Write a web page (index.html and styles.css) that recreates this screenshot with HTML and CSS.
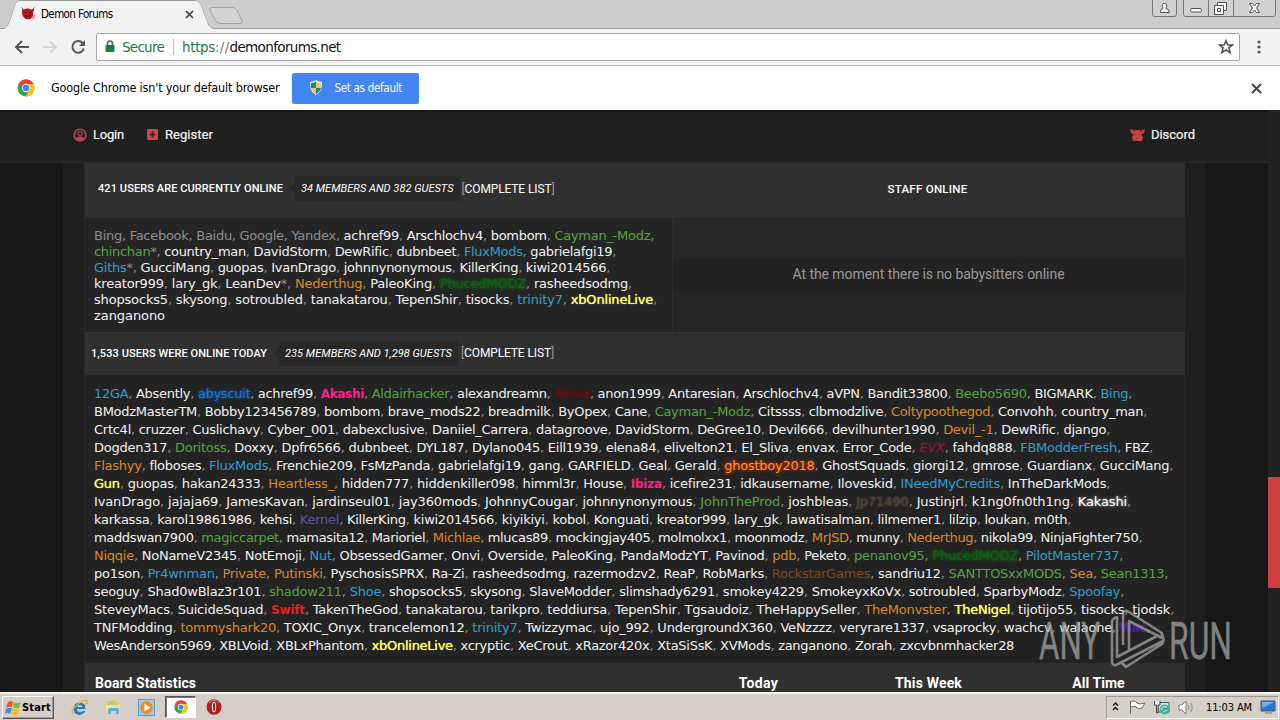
FILE: index.html
```html
<!DOCTYPE html>
<html lang="en">
<head>
<meta charset="utf-8">
<title>Demon Forums</title>
<link rel="stylesheet" href="styles.css">
</head>
<body>
<div class="screen">
  <header class="tabstrip">
    <svg class="tab-shape" width="250" height="29"><path d="M0 28.5H5Q8 27 10 21L15 6Q17 1 20 .5H195Q199 1 201 6L207 22Q209 28 213 28.5H250" fill="none" stroke="#999"/><path d="M4 29Q8 27 10 21L15 6Q17 1 20 1H195Q199 1 201 6L207 22Q209 28 214 29Z" fill="#f2f2f2"/><path d="M212 7.500H233Q236 8 237 10L242 21Q243 23.500 240 23.500H220Q217 23 216 21L210 10Q209 8 212 7.500Z" fill="#d3d3d3" stroke="#a2a2a2"/></svg>
    <div class="tab">
      <svg width="15" height="14" viewBox="0 0 15 14"><path d="M1 2L3 2.500Q7 .5 10 2.500L13 2Q13 4 12 6Q13 10 9 12Q4 13 2 9.500L1 6Z" fill="#b5141c"/><path d="M.5 .5L3 3.500M13.500 .5L10.500 3.500" stroke="#555"/><path d="M4 5L6 6M10 5L8 6M4 8.500Q7 11 10 7.500" stroke="#500" fill="none"/><path d="M11 12Q14 12 13 8" stroke="#d55" fill="none"/></svg>
      <span class="ui tab-title" data-fit="71.500">Demon Forums</span>
      <svg class="tab-close" width="9" height="9"><path d="M1 1L8 8M8 1L1 8" stroke="#444" stroke-width="1.700"/></svg>
    </div>
    <svg class="winctl" width="126" height="18"><g fill="#d1d1d1" stroke="#777"><path d="M.5 -1V14Q.5 16.500 3 16.500H22Q24.500 16.500 24.500 14V-1"/><path d="M31.500 -1V14Q31.500 16.500 34 16.500H121Q123.500 16.500 123.500 14V-1M56.500 0V16M81.500 0V16"/></g><g fill="#f6f6f6" stroke="#555"><path d="M8.500 12.500Q8 8.500 11 8.500Q9 3.500 12.500 3.500Q16 3.500 14 8.500Q17 8.500 17.500 12.500Z"/><rect x="38.500" y="8.500" width="11" height="3.500" rx="1.500"/><path d="M65.500 2.500H74.500V10.500H65.500Z"/><path d="M62.500 5.500H71.500V14.500H62.500ZM65.500 8.500H68.500V11.500H65.500Z"/><path d="M97.500 3.500H100.500L102.500 6L104.500 3.500H107.500L104.500 8L107.500 12.500H104.500L102.500 10L100.500 12.500H97.500L100.500 8Z"/></g></svg>
  </header>

  <div class="toolbar">
    <svg class="nav-icons" width="88" height="20" fill="none" stroke-width="2"><path d="M21 10H8M14 4L8 10L14 16" stroke="#555"/><path d="M35 10H48M42 4.500L48 10L42 15.500" stroke="#d5d5d5"/><path d="M74.500 6A5.800 5.800 0 1 0 75.800 11.500" stroke="#555"/><path d="M77 3V9H71Z" fill="#555"/></svg>
    <div class="omnibox">
      <svg width="10" height="13"><path d="M2.500 6V4Q2.500 1 5 1T7.500 4V6" fill="none" stroke="#188038" stroke-width="1.500"/><rect x=".5" y="5" width="9" height="7" rx="1" fill="#188038"/></svg>
      <span class="secure" data-fit="42">Secure</span>
      <i class="divider"></i>
      <span class="url scheme" data-fit="33">https</span><span class="url slashes" data-fit="14.500">://</span><span class="url" data-fit="111">demonforums.net</span>
      <svg class="star" width="16" height="16"><path d="M8 1.700L9.800 6H14.500L10.800 8.900L12.200 13.600L8 10.800L3.800 13.600L5.200 8.900L1.500 6H6.200Z" fill="none" stroke="#4d4d4d" stroke-width="1.500"/></svg>
    </div>
    <svg class="menu" width="6" height="16" fill="#555"><circle cx="3" cy="3" r="1.600"/><circle cx="3" cy="8" r="1.600"/><circle cx="3" cy="13" r="1.600"/></svg>
  </div>

  <div class="infobar">
    <svg width="18" height="18" viewBox="0 0 18 18"><use href="#chrome"/></svg>
    <span class="ui prompt" data-fit="228.500">Google Chrome isn't your default browser</span>
    <button class="set-default">
      <svg width="14" height="16" viewBox="0 0 14 16"><path d="M7 0Q10 2 13 2Q14 11 7 15Q0 11 1 2Q4 2 7 0Z" fill="#e8edf3"/><path d="M7 1.500V8H2V3Q5 3 7 1.500ZM7 8H12Q11 12 7 14Z" fill="#1d78b9"/><path d="M7 1.500V8H12V3Q9 3 7 1.500ZM7 8H2Q3 12 7 14Z" fill="#f7cf35"/></svg>
      <span class="ui" data-fit="67.500">Set as default</span>
    </button>
    <svg class="info-close" width="11" height="11"><path d="M1 1L10 10M10 1L1 10" stroke="#444" stroke-width="2"/></svg>
  </div>

  <main class="page">
    <div class="content">
      <nav class="site-nav">
        <svg width="14" height="14"><circle cx="7" cy="7" r="5.800" fill="none" stroke="#c8404a" stroke-width="1.600"/><circle cx="7" cy="5.500" r="2.300" fill="none" stroke="#c8404a"/><path d="M3 11Q4 8 7 8.500Q10 8 11 11L7 13Z" fill="#c8404a"/></svg>
        <span class="login" data-fit="31">Login</span>
        <svg class="plus" width="11" height="11" viewBox="0 0 12 12"><rect width="12" height="12" rx="1.500" fill="#d0424e"/><path d="M6 3V9M3 6H9" stroke="#222" stroke-width="1.800"/></svg>
        <span class="register" data-fit="48">Register</span>
        <svg class="discord-icon" width="15" height="14" fill="#cc4141"><path d="M0 1L2 2L3 1L4 4L5 2H10L11 4L12 1L13 2L15 1L14 5L11 6.500L13 9L12 13H3L2 9L4 6.500L1 5Z"/><path d="M5 7H6M9 7H10M6 10H9" stroke="#8b2b2d"/></svg>
        <span data-fit="44">Discord</span>
      </nav>
      <div class="shell">
        <section class="panel">
          <div class="head head-now">
            <span class="title" data-fit="185">421 USERS ARE CURRENTLY ONLINE</span>
            <span class="pill"><em data-fit="152.500">34 MEMBERS AND 382 GUESTS</em></span>
            <span class="complete" data-fit="93">[<b>COMPLETE LIST</b>]</span>
            <span class="staff"><span data-fit="80">STAFF ONLINE</span></span>
          </div>
          <div class="row-now">
            <div class="names" id="now"></div>
            <div class="no-staff"><span data-fit="272">At the moment there is no babysitters online</span></div>
          </div>
          <div class="head head-today">
            <span class="title" data-fit="176">1,533 USERS WERE ONLINE TODAY</span>
            <span class="pill"><em data-fit="167">235 MEMBERS AND 1,298 GUESTS</em></span>
            <span class="complete" data-fit="93">[<b>COMPLETE LIST</b>]</span>
          </div>
          <div class="names today" id="today"></div>
          <div class="head stats">
            <span class="board"><span data-fit="101">Board Statistics</span></span>
            <span class="stat"><span data-fit="39.500">Today</span></span>
            <span class="stat"><span data-fit="67">This Week</span></span>
            <span class="stat"><span data-fit="52.500">All Time</span></span>
          </div>
        </section>
      </div>
    </div>
    <div class="scrollbar"><div class="thumb"></div></div>
  </main>

  <footer class="taskbar">
    <div class="start">
      <svg width="16" height="16"><path d="M3 2Q6 0 8 2L7 7Q4 6 1 8Z" fill="#e65a2b"/><path d="M9 2Q12 4 16 2L14 8Q11 9 8 7Z" fill="#78b843"/><path d="M1 9Q4 7 7 8L5 14Q3 12 0 14Z" fill="#3c8ed0"/><path d="M8 8Q11 10 14 9L12 15Q8 16 6 14Z" fill="#f4bd25"/></svg>
      <span data-fit="29">Start</span>
    </div>
    <svg class="ie" width="18" height="17"><path d="M14.500 10H6Q6 13 9 13Q11 13 12 12H14.500Q12 16 8 16Q2.500 15 2.500 9.500Q3 3.500 8.500 3.500Q14.500 3.500 14.500 10ZM6 8H11.500Q11 6 9 6T6 8Z" fill="#1f7fce"/><path d="M2 15Q-1 12 6 6Q15 -1 16 2Q17 4 14 6" fill="none" stroke="#e1ad24" stroke-width="1.300"/></svg>
    <svg class="explorer" width="16" height="16"><path d="M1 3H6L7 1H12V4H15V13H1Z" fill="#ecca60"/><path d="M3 2H10V6H3Z" fill="#a6cd94"/><path d="M1 6H15V13H1Z" fill="#f6e28c"/><path d="M3 15V10Q3 9 5 9H12Q14 9 14 11V15H11V12H6V15H3Z" fill="#62aee0"/></svg>
    <svg class="media" width="17" height="17"><rect x=".5" y=".5" width="16" height="16" fill="#9fc8ec" stroke="#5f9bcf"/><circle cx="8.500" cy="8.500" r="6.300" fill="#f38b18"/><path d="M6.500 4.500L12.500 8.500L6.500 12.500Z" fill="#fff"/></svg>
    <div class="active-app"><svg width="14" height="14" viewBox="0 0 18 18"><g id="chrome"><circle cx="9" cy="9" r="8.500" fill="#32a350"/><path d="M1.600 4.800A8.500 8.500 0 0 1 16.400 4.800L9 5.500L5 10Z" fill="#e84335"/><path d="M16.500 5A8.500 8.500 0 0 1 8.500 17.500L12.500 11L12 6L9 5Z" fill="#fbc116"/><circle cx="9" cy="9" r="4.200" fill="#fff"/><circle cx="9" cy="9" r="3.300" fill="#4a82ed"/></g></svg></div>
    <svg class="opera" width="16" height="16"><ellipse cx="8" cy="8" rx="7.500" ry="7.800" fill="#b31c1d"/><path d="M3 4Q8 -1 13 4" stroke="#e77" fill="none"/><ellipse cx="8" cy="8" rx="2.200" ry="5.300" fill="#f3e9e5"/><ellipse cx="8" cy="8" rx="1" ry="4.300" fill="#9b1717"/></svg>
    <div class="tray">
      <svg width="94" height="20"><path d="M6 8.500L8.500 6L11 8.500M6 13L8.500 10.500L11 13" fill="none" stroke="#111" stroke-width="1.500"/><path d="M23.500 4V17M23.500 4.500Q28 3 30 6Q33 8 38 6L35 11Q31 13 29 10Q27 9 23.500 10Z" fill="#fff" stroke="#666"/><path d="M51 5.500H62V15H51Z" fill="#d5e5ea" stroke="#3e5d68"/><path d="M47.500 4V8H49.500V16H51V8H53V4" fill="#eee" stroke="#444"/><circle cx="57.500" cy="12.500" r="5" fill="#3baea4"/><path d="M54 13Q56 8 60 10M56 15L60 13" stroke="#b9dfc5" fill="none" stroke-width="1.300"/><path d="M72 8H75L79 4V17L75 13H72Z" fill="#fff" stroke="#777"/><path d="M81 8Q83 10.500 81 13M83.500 6Q87 10.500 83.500 15" fill="none" stroke="#888"/></svg>
      <span class="clock" data-fit="46">11:03 AM</span>
      <svg class="desk" width="16" height="14"><path d="M1 1H15V11H1Z" fill="#2b77d8" stroke="#3c5877"/><path d="M2 2H14L2 8Z" fill="#75b2f2"/><path d="M5 13H12" stroke="#777"/></svg>
    </div>
  </footer>

  <svg class="watermark" width="194" height="64"><g fill="#a9a9a9" stroke="#a9a9a9" stroke-width=".4" font-family="Roboto" font-size="52"><text x="0" y="50" textLength="61" lengthAdjust="spacingAndGlyphs">ANY</text><text x="130" y="50" textLength="63" lengthAdjust="spacingAndGlyphs">RUN</text></g><g fill="none" stroke="#a9a9a9" stroke-width="2.600" stroke-linejoin="round"><path d="M84 36V4Q86 0 90 3L123 24V29L90 12V42"/><path d="M79 8Q73 9 73 13V53Q74 58 79 55L124 32M78 8V48L120 26M83 54L87 58L123 35Q126 31 123 26"/></g></svg>
</div>
<script src="app.js"></script>
</body>
</html>
```
FILE: styles.css
```css
* { box-sizing: border-box; }
body { margin: 0; overflow: hidden; }
svg { display: block; flex: none; }
.screen { position: relative; width: 1280px; height: 720px; display: flex; flex-direction: column; overflow: hidden; font-family: "DejaVu Sans", Verdana, sans-serif; }
[data-fit] { display: inline-block; white-space: nowrap; }
.ui { font: 11.5px "DejaVu Sans Condensed", "DejaVu Sans", sans-serif; }

.tabstrip { height: 29px; display: flex; justify-content: space-between; background: #ccc; border-bottom: 1px solid #999; flex: none; }
.tab-shape { position: absolute; left: 0; top: 0; }
.tab { position: relative; display: flex; align-items: center; height: 28px; padding-left: 21px; color: #000; }
.tab-title { margin-left: 5px; }
.tab-close { margin-left: 72px; margin-top: 1px; }
.winctl { margin-right: 2px; }
.toolbar { height: 37px; background: #f2f2f2; border-bottom: 1px solid #b6b6b6; display: flex; align-items: center; flex: none; padding: 0 18px 1px 8px; }
.omnibox { width: 1144px; height: 28px; background: #fff; border: 1px solid #a6a6a6; border-radius: 2px; display: flex; align-items: center; padding: 0 5px 0 8px; font-size: 13.5px; }
.secure { margin-left: 7px; color: #188038; }
.divider { width: 1px; height: 16px; background: #bbb; margin: 0 8px 0 9px; }
.url { color: #111; }
.url.scheme { color: #188038; }
.url.slashes { color: #777; }
.star { margin-left: auto; }
.menu { margin-left: 16px; }
.infobar { height: 44px; background: #fff; display: flex; align-items: center; padding: 0 18px 0 17px; flex: none; }
.prompt { margin-left: 16px; font-size: 12.5px; margin-top: -2px; }
.set-default { margin-left: 12px; width: 127px; height: 31px; display: flex; align-items: center; background: #4285f4; border: 0; border-radius: 2px; color: #fff; padding: 0 0 1px 17px; }
.set-default .ui { margin-left: 12px; }
.info-close { margin-left: auto; }

.page { height: 582px; background: #171717; display: flex; flex: none; overflow: hidden; }
.content { width: 1268px; }
.site-nav { height: 53px; background: #202020; border-bottom: 2px solid #272727; border-top: 2px solid #191919; display: flex; align-items: center; padding: 0 73px 4px; color: #f4f4f4; font: 400 13px Roboto, sans-serif; -webkit-text-stroke: .2px; }
.login { margin-left: 6px; }
.plus { margin-left: 23px; }
.register { margin-left: 7px; }
.discord-icon { margin-left: auto; margin-right: 6px; }
.shell { margin-left: 63px; width: 1142px; height: 529px; padding: 0 20px 0 21px; background: #1f1f1f; }
.panel { width: 1101px; background: #252525; border-left: 1px solid #2c2c2c; }
.head { background: #303030; display: flex; align-items: center; color: #fff; font: 500 11px Roboto, sans-serif; }
.head-now { height: 55px; padding: 0 0 3px 13px; border-bottom: 1px solid #282828; }
.head-today { height: 43px; padding: 0 0 2px 6px; border-top: 1px solid #353535; }
.pill { position: relative; height: 25px; display: flex; align-items: center; background: #282828; margin-left: 12px; padding: 0 6px; font-weight: 400; }
.pill::before { content: ""; position: absolute; left: -5px; top: 7px; border: 5px solid transparent; border-right-color: #282828; border-left: 0; }
.complete { margin-left: 2px; font-size: 12px; color: #999; font-weight: 400; }
.head-today .complete { margin-left: 3px; }
.complete b { color: #fff; font-weight: 400; }
.staff { margin-left: 333px; font-size: 11.5px; }
.row-now { height: 114px; display: flex; }
.names { width: 588px; padding: 10px 0 0 9px; font-size: 13px; line-height: 16px; color: #8e8e8e; border-right: 1px solid #2d2d2d; }
.names div { white-space: pre; height: 16px; }
.names.today { width: auto; height: 288px; border: 0; line-height: 18px; background: #232323; }
.names.today div { height: 18px; }
.no-staff { flex: 1; display: flex; align-items: center; justify-content: center; color: #999; font: 14px Roboto, sans-serif; background: linear-gradient(#272727 0 34%, #232323 36% 64%, #262626 66%); padding: 0 1px 2px 0; }
.stats { height: 40px; font: 700 14px Roboto, sans-serif; }
.board { width: 580px; padding-left: 10px; }
.stat { width: 170px; text-align: center; padding-left: 17px; }
.scrollbar { width: 12px; background: #222; padding-top: 367px; }
.thumb { height: 111px; background: #cc3f3f; }

.names span { color: #f2f2f2; }
.names .x { color: #8e8e8e; }
.names .g { color: #55a33d; }
.names .b { color: #2b9fd0; }
.names .o { color: #df8820; }
.names .y { color: #ffff68; text-shadow: 0 0 1px #ffff68; }
.names .p { color: #ff1f8d; font-weight: bold; font-size: 12px; }
.names .r { color: #e3212a; font-weight: bold; font-size: 12px; }
.names .k { color: #5a55a5; }
.names .a { color: #2674c2; text-shadow: 0 0 3px #0b55aa, 0 0 4px #0b55aa; }
.names .h { color: #145e18; text-shadow: 0 0 3px #126a14, 0 0 4px #126a14; }
.names .d { color: #5e1111; text-shadow: 0 0 3px #800b0b; }
.names .f { color: #ff9140; text-shadow: 0 0 4px #d83500, 0 0 4px #a33000; }
.names .e { color: #8c1640; font-style: italic; text-shadow: 0 0 3px #5c1630; }
.names .j { color: #45413c; text-shadow: 0 0 2px #776242; }
.names .n { color: #7e481c; }
.names .w { color: #fff; text-shadow: 0 0 3px #bbb; }
.names .v { color: #5722a0; text-shadow: 0 0 3px #5a18cc; }

.taskbar { height: 28px; background: #d5cfc7; border-top: 2px solid #f7f5f0; display: flex; align-items: center; flex: none; padding: 0 1px 0 2px; }
.start { width: 52px; height: 23px; display: flex; align-items: center; gap: 1px; padding-left: 2px; border: 1px solid; border-color: #fff #555 #555 #fff; box-shadow: inset -1px -1px #999; font: bold 11px "DejaVu Sans Condensed", sans-serif; margin-top: 1px; }
.ie { margin-left: 17px; }
.explorer { margin-left: 16px; }
.media { margin-left: 17px; }
.active-app { margin-left: 10px; width: 31px; height: 22px; background: #fff; border: 1px solid; border-color: #555 #fff #fff #555; box-shadow: inset 1px 1px #777; display: flex; align-items: center; justify-content: center; }
.opera { margin-left: 10px; }
.tray { margin-left: auto; width: 173px; height: 23px; border: 1px solid; border-color: #999 #fff #fff #999; display: flex; align-items: center; }
.clock { margin-left: 5px; font: 11px "DejaVu Sans Condensed", sans-serif; }
.desk { margin-left: 8px; }
.watermark { position: absolute; left: 1039px; top: 609px; opacity: .72; overflow: visible; }
```
FILE: app.js
```js
// Each entry: [line width, members]. "c:name" assigns the member group colour.
const now = [
  [560, "x:Bing, x:Facebook, x:Baidu, x:Google, x:Yandex, achref99, Arschlochv4, bombom, g:Cayman_-Modz,"],
  [522, "g:chinchan*, country_man, DavidStorm, DewRific, dubnbeet, b:FluxMods, gabrielafgi19,"],
  [516, "b:Giths*, GucciMang, guopas, IvanDrago, johnnynonymous, KillerKing, kiwi2014566,"],
  [538, "kreator999, lary_gk, LeanDev*, o:Nederthug, PaleoKing, h:PhucedMODZ, rasheedsodmg,"],
  [563, "shopsocks5, skysong, sotroubled, tanakatarou, TepenShir, tisocks, b:trinity7, y:xbOnlineLive,"],
  [71, "zanganono"]
];
const today = [
  [1038, "b:12GA, Absently, a:abyscuit, achref99, p:Akashi, g:Aldairhacker, alexandreamn, d:Annie, anon1999, Antaresian, Arschlochv4, aVPN, Bandit33800, g:Beebo5690, BIGMARK, b:Bing,"],
  [1053, "BModzMasterTM, Bobby123456789, bombom, brave_mods22, breadmilk, ByOpex, Cane, g:Cayman_-Modz, Citssss, clbmodzlive, o:Coltypoothegod, Convohh, country_man,"],
  [1016, "Crtc4l, cruzzer, Cuslichavy, Cyber_001, dabexclusive, Daniiel_Carrera, datagroove, DavidStorm, DeGree10, Devil666, devilhunter1990, o:Devil_-1, DewRific, django,"],
  [1059, "Dogden317, g:Doritoss, Doxxy, Dpfr6566, dubnbeet, DYL187, Dylano045, Eill1939, elena84, elivelton21, El_Sliva, envax, Error_Code, e:EVX, fahdq888, b:FBModderFresh, FBZ,"],
  [1079, "o:Flashyy, floboses, b:FluxMods, Frenchie209, FsMzPanda, gabrielafgi19, gang, GARFIELD, Geal, Gerald, f:ghostboy2018, GhostSquads, giorgi12, gmrose, Guardianx, GucciMang,"],
  [1016, "y:Gun, guopas, hakan24333, o:Heartless_, hidden777, hiddenkiller098, himml3r, House, p:Ibiza, icefire231, idkausername, Iloveskid, b:INeedMyCredits, InTheDarkMods,"],
  [1037, "IvanDrago, jajaja69, JamesKavan, jardinseul01, jay360mods, JohnnyCougar, johnnynonymous, g:JohnTheProd, joshbleas, j:Jp71490, Justinjrl, k1ng0fn0th1ng, w:Kakashi,"],
  [977, "karkassa, karol19861986, kehsi, k:Kernel, KillerKing, kiwi2014566, kiyikiyi, kobol, Konguati, kreator999, lary_gk, lawatisalman, lilmemer1, lilzip, loukan, m0th,"],
  [1048, "maddswan7900, g:magiccarpet, mamasita12, Marioriel, o:Michlae, mlucas89, mockingjay405, molmolxx1, moonmodz, o:MrJSD, munny, o:Nederthug, nikola99, NinjaFighter750,"],
  [1029, "o:Niqqie, NoNameV2345, NotEmoji, b:Nut, ObsessedGamer, Onvi, Overside, PaleoKing, PandaModzYT, Pavinod, o:pdb, Peketo, g:penanov95, h:PhucedMODZ, b:PilotMaster737,"],
  [1074, "po1son, b:Pr4wnman, o:Private, o:Putinski, PyschosisSPRX, Ra-Zi, rasheedsodmg, razermodzv2, ReaP, RobMarks, n:RockstarGames, sandriu12, g:SANTTOSxxMODS, o:Sea, g:Sean1313,"],
  [1030, "seoguy, Shad0wBlaz3r101, g:shadow211, b:Shoe, shopsocks5, skysong, SlaveModder, slimshady6291, smokey4229, SmokeyxKoVx, sotroubled, SparbyModz, b:Spoofay,"],
  [1080, "SteveyMacs, SuicideSquad, r:Swift, TakenTheGod, tanakatarou, tarikpro, teddiursa, TepenShir, Tgsaudoiz, TheHappySeller, o:TheMonvster, y:TheNigel, tijotijo55, tisocks, tjodsk,"],
  [1056, "TNFModding, o:tommyshark20, TOXIC_Onyx, trancelemon12, b:trinity7, Twizzymac, ujo_992, UndergroundX360, VeNzzzz, veryrare1337, vsaprocky, wachcv, walaone, v:Wac,"],
  [920, "WesAnderson5969, XBLVoid, XBLxPhantom, y:xbOnlineLive, xcryptic, XeCrout, xRazor420x, XtaSiSsK, XVMods, zanganono, Zorah, zxcvbnmhacker28"]
];

function renderNames(id, lines) {
  const root = document.getElementById(id);
  for (const [width, text] of lines) {
    const row = document.createElement("div");
    const line = document.createElement("p");
    line.style.cssText = "display:inline-block;margin:0";
    line.dataset.fit = width;
    line.style.whiteSpace = "pre";
    text.split(/(, |,$)/).forEach(part => {
      if (!part) return;
      if (part[0] === ",") { line.append(part); return; }
      const match = part.match(/^(?:([a-z]):)?(.*?)(\*?)$/);
      const name = document.createElement("span");
      if (match[1]) name.className = match[1];
      name.textContent = match[2];
      line.append(name, match[3]);
    });
    row.append(line);
    root.append(row);
  }
}

renderNames("now", now);
renderNames("today", today);

// Adjust tracking so every label occupies its intended width.
document.querySelectorAll("[data-fit]").forEach(el => {
  const gap = Number(el.dataset.fit) - el.getBoundingClientRect().width;
  el.style.letterSpacing = gap / el.textContent.length + "px";
});
```
